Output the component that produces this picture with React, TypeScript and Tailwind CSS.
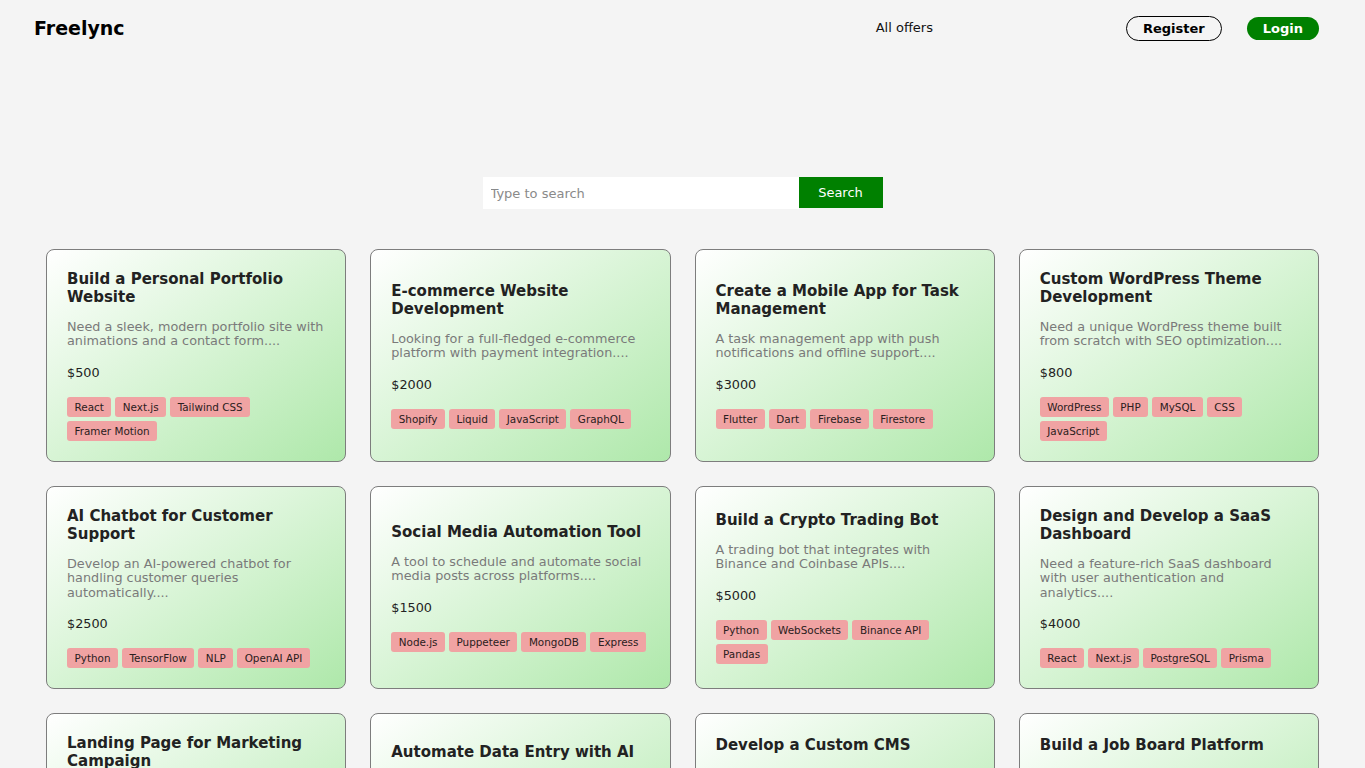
type Offer = {
  title: string
  description: string
  price: number
  tags: string[]
}

const offers: Offer[] = [
  {
    title: 'Build a Personal Portfolio Website',
    description: 'Need a sleek, modern portfolio site with animations and a contact form.',
    price: 500,
    tags: ['React', 'Next.js', 'Tailwind CSS', 'Framer Motion'],
  },
  {
    title: 'E-commerce Website Development',
    description: 'Looking for a full-fledged e-commerce platform with payment integration.',
    price: 2000,
    tags: ['Shopify', 'Liquid', 'JavaScript', 'GraphQL'],
  },
  {
    title: 'Create a Mobile App for Task Management',
    description: 'A task management app with push notifications and offline support.',
    price: 3000,
    tags: ['Flutter', 'Dart', 'Firebase', 'Firestore'],
  },
  {
    title: 'Custom WordPress Theme Development',
    description: 'Need a unique WordPress theme built from scratch with SEO optimization.',
    price: 800,
    tags: ['WordPress', 'PHP', 'MySQL', 'CSS', 'JavaScript'],
  },
  {
    title: 'AI Chatbot for Customer Support',
    description: 'Develop an AI-powered chatbot for handling customer queries automatically.',
    price: 2500,
    tags: ['Python', 'TensorFlow', 'NLP', 'OpenAI API'],
  },
  {
    title: 'Social Media Automation Tool',
    description: 'A tool to schedule and automate social media posts across platforms.',
    price: 1500,
    tags: ['Node.js', 'Puppeteer', 'MongoDB', 'Express'],
  },
  {
    title: 'Build a Crypto Trading Bot',
    description: 'A trading bot that integrates with Binance and Coinbase APIs.',
    price: 5000,
    tags: ['Python', 'WebSockets', 'Binance API', 'Pandas'],
  },
  {
    title: 'Design and Develop a SaaS Dashboard',
    description: 'Need a feature-rich SaaS dashboard with user authentication and analytics.',
    price: 4000,
    tags: ['React', 'Next.js', 'PostgreSQL', 'Prisma'],
  },
  {
    title: 'Landing Page for Marketing Campaign',
    description: 'A high-converting landing page for an upcoming product launch.',
    price: 700,
    tags: ['HTML', 'CSS', 'JavaScript'],
  },
  {
    title: 'Automate Data Entry with AI',
    description: 'Extract data from scanned invoices and push it into our CRM.',
    price: 1800,
    tags: ['Python', 'OCR', 'OpenAI API'],
  },
  {
    title: 'Develop a Custom CMS',
    description: 'A lightweight content management system with roles, drafts and media library support.',
    price: 3500,
    tags: ['Node.js', 'React', 'MongoDB'],
  },
  {
    title: 'Build a Job Board Platform',
    description: 'A job board with employer accounts, listings, filters and email alerts for candidates.',
    price: 3200,
    tags: ['Next.js', 'Prisma', 'PostgreSQL'],
  },
]

function OfferCard({ offer }: { offer: Offer }) {
  return (
    <div className="flex flex-col justify-center gap-3.5 rounded-lg border border-[#7d7d7d] bg-gradient-to-br from-white to-[#aee8aa] p-5">
      <h2 className="text-[15px] font-bold leading-[18px] text-[#222]">{offer.title}</h2>
      <p className="text-[12.8px] leading-[14.4px] text-[#7a7a7a]">{offer.description}...</p>
      <p className="text-[12.8px] leading-5 text-[#222]">${offer.price}</p>
      <div className="flex flex-wrap gap-1">
        {offer.tags.map((tag) => (
          <span
            key={tag}
            className="rounded-[3px] bg-[#f0a3a3] px-[7.5px] py-[3px] text-[10.4px] leading-[14px] text-[#2a2020]"
          >
            {tag}
          </span>
        ))}
      </div>
    </div>
  )
}

export default function App() {
  return (
    <div className="min-h-screen bg-[#f4f4f4] font-['DejaVu_Sans',sans-serif]">
      <header className="flex h-14 items-center pl-[34px] pr-[46px]">
        <a href="#" className="text-[19px] font-bold text-black">
          Freelync
        </a>
        <nav className="ml-auto mr-[193px] text-[13px] text-[#111]">
          <a href="#">All offers</a>
        </nav>
        <div className="flex items-center gap-[25px]">
          <button className="rounded-full border border-black px-4 py-1 text-[13px] font-bold leading-[15px] text-black">
            Register
          </button>
          <button className="rounded-full bg-[#008000] px-4 py-1 text-[13px] font-bold leading-[15px] text-white">
            Login
          </button>
        </div>
      </header>

      <main className="pb-10">
        <div className="mt-[121px] flex justify-center">
          <input
            type="text"
            placeholder="Type to search"
            className="h-8 w-[316px] bg-white px-2 text-[13px] text-[#222] outline-none placeholder:text-[#8a8a8a]"
          />
          <button className="h-[31px] w-[84px] bg-[#008000] text-[13px] text-white">Search</button>
        </div>

        <div className="mt-10 grid grid-cols-4 gap-6 px-[46px]">
          {offers.map((offer) => (
            <OfferCard key={offer.title} offer={offer} />
          ))}
        </div>
      </main>
    </div>
  )
}
